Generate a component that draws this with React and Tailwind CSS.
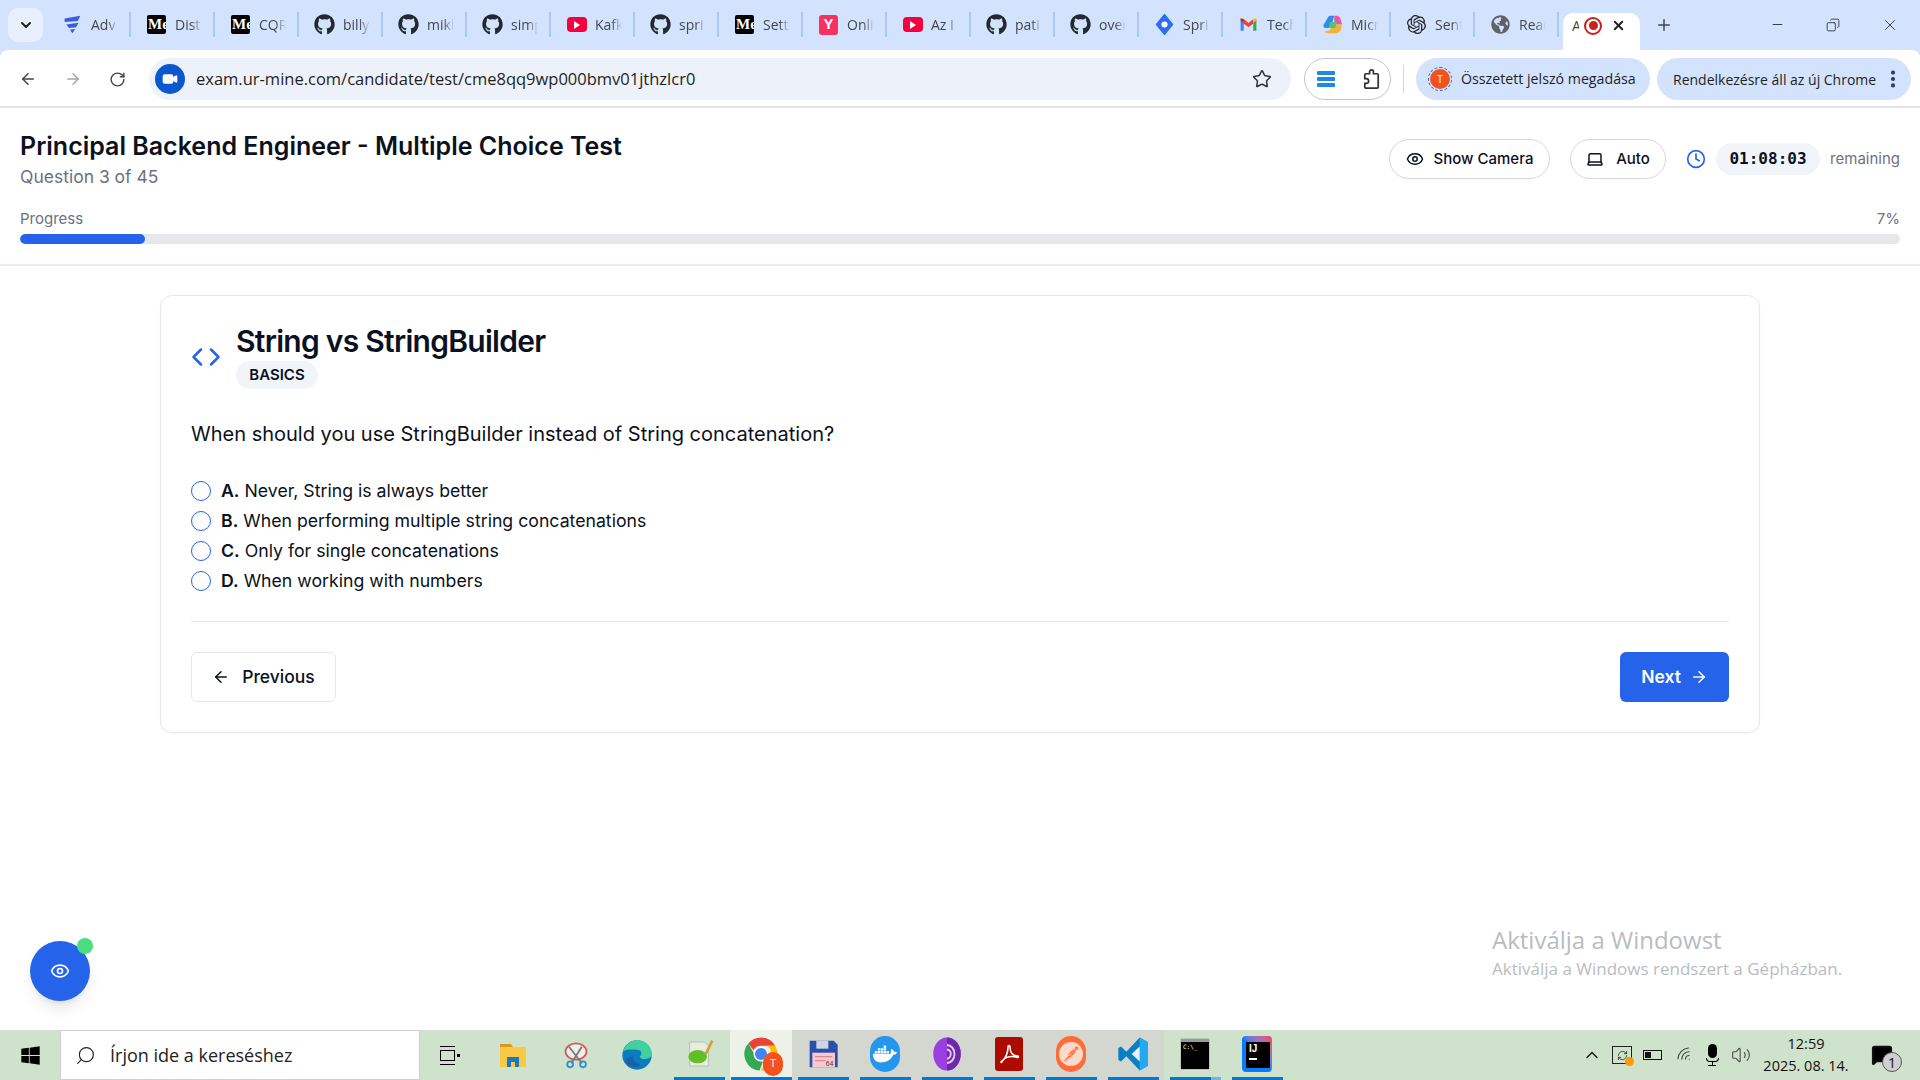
import { ArrowLeft, ArrowRight, RotateCw, Star, Video, Eye, Laptop, Clock, Code, ChevronDown, Plus, X, Minus, Copy, MoreVertical, Search, Volume2, Wifi, ChevronUp, MessageSquare, RefreshCw } from "lucide-react"
import { FaGithub, FaDocker, FaWindows, FaGlobeAmericas } from "react-icons/fa"
import { SiOpenai, SiPostman } from "react-icons/si"

const ui = "font-['Open_Sans',sans-serif]"

function Medium() {
  return (
    <div className="flex h-[19px] w-[19px] items-center overflow-hidden rounded-[2px] bg-black pl-px font-['Liberation_Serif',serif] text-[15px] font-bold leading-none text-white">
      Me
    </div>
  )
}

function Red() {
  return (
    <div className="flex h-[15px] w-[20px] items-center justify-center rounded-[4px] bg-[#f5003c]">
      <div className="h-0 w-0 border-y-[4px] border-l-[6px] border-y-transparent border-l-white" />
    </div>
  )
}

const github = <FaGithub className="h-[21px] w-[21px] text-[#24292f]" />

function Gmail() {
  return (
    <svg viewBox="0 0 24 24" className="h-[19px] w-[19px]">
      <path d="M2 20V6l4 3v11z" fill="#4285f4" />
      <path d="M22 20V6l-4 3v11z" fill="#34a853" />
      <path d="M6 11V5l6 5 6-5v6l-6 4.500z" fill="#ea4335" />
      <path d="M18 5l4-1v3l-4 3z" fill="#fbbc04" />
      <path d="M2 4l4 1v5L2 7z" fill="#c5221f" />
    </svg>
  )
}

function Copilot() {
  return (
    <svg viewBox="0 0 24 24" className="h-[21px] w-[21px]">
      <path d="M8 2h6l-4 14H4C2 16 1 14 2 12z" fill="#2f8ee8" />
      <path d="M14 2h3c2 0 3 1 4 3l2 7h-9z" fill="#e85aa8" />
      <path d="M10 12h12c1 3 0 8-5 10H7c-2 0-3-1-4-2l4-1c2 0 3-2 3-3z" fill="#f2b233" />
      <path d="M9 9h8l-2 7H8z" fill="#54c27d" />
    </svg>
  )
}

function Diamond() {
  return (
    <svg viewBox="0 0 24 24" className="h-[21px] w-[21px]">
      <path d="M12 1l9 11-9 11-9-11z" fill="#2f6fed" stroke="#2f6fed" strokeWidth="2" strokeLinejoin="round" />
      <circle cx="12" cy="12" r="3.500" fill="#fff" />
    </svg>
  )
}

const tabs = [
  { text: "Adv", icon: <svg viewBox="0 0 24 24" className="h-[21px] w-[21px]"><path d="M3 5l18-3-3 6-15 1zM5 12l14-2-3 5-8 1zM9 18l6-1-3 5z" fill="#3a5ce0" /></svg> },
  { text: "Dist", icon: <Medium /> },
  { text: "CQR", icon: <Medium /> },
  { text: "billy", icon: github },
  { text: "mikl", icon: github },
  { text: "simp", icon: github },
  { text: "Kafk", icon: <Red /> },
  { text: "spri", icon: github },
  { text: "Sett", icon: <Medium /> },
  { text: "Onli", icon: <div className="flex h-[20px] w-[19px] items-center justify-center rounded-[3px] bg-[#f7305f] font-['Liberation_Sans',sans-serif] text-[15px] font-bold text-white">Y</div> },
  { text: "Az I", icon: <Red /> },
  { text: "pati", icon: github },
  { text: "over", icon: github },
  { text: "Spri", icon: <Diamond /> },
  { text: "Tech", icon: <Gmail /> },
  { text: "Micr", icon: <Copilot /> },
  { text: "Sent", icon: <SiOpenai className="h-[19px] w-[19px] text-[#222]" /> },
  { text: "Read", icon: <FaGlobeAmericas className="h-[19px] w-[19px] text-[#5f6368]" /> },
]

function BrowserTabs() {
  return (
    <div className={`flex h-[50px] items-end ${ui}`}>
      <div className="mb-[8px] ml-[8px] mr-[4px] flex h-[34px] w-[35px] items-center justify-center rounded-[10px] bg-[#e9f0fd]">
        <ChevronDown className="h-4 w-4 text-[#1f1f1f]" strokeWidth={3} />
      </div>
      {tabs.map((t) => (
        <div key={t.text} className="mb-[13px] flex h-[25px] w-[84px] items-center border-r-2 border-[#a8c7fa] pl-[15px]">
          <div className="flex w-[21px] shrink-0 justify-center">{t.icon}</div>
          <div className="ml-[8px] w-[27px] overflow-hidden whitespace-nowrap text-[14px] text-[#444746] [mask-image:linear-gradient(to_right,black_60%,transparent)]">
            {t.text}
          </div>
        </div>
      ))}
      <div className="ml-[4px] flex h-[37px] w-[77px] items-center rounded-t-[10px] bg-white pb-[12px] pl-[9px]">
        <div className="w-[7px] overflow-hidden text-[14px] text-[#444746]">A</div>
        <div className="ml-[5px] flex h-[18px] w-[18px] items-center justify-center rounded-full border-2 border-[#c5221f]">
          <div className="h-[9px] w-[9px] rounded-full bg-[#c5221f]" />
        </div>
        <X className="ml-[9px] h-[15px] w-[15px] text-[#1f1f1f]" strokeWidth={3} />
      </div>
      <Plus className="mb-[16px] ml-[15px] h-[18px] w-[18px] text-[#444746]" strokeWidth={2} />
      <Minus className="mb-[18px] ml-[97px] h-[15px] w-[15px] text-[#333]" strokeWidth={1.500} />
      <Copy className="mb-[18px] ml-[41px] h-[14px] w-[14px] -scale-x-100 text-[#333]" strokeWidth={1.500} />
      <X className="mb-[16px] ml-[41px] h-[18px] w-[18px] text-[#333]" strokeWidth={1.200} />
    </div>
  )
}

function Toolbar() {
  return (
    <div className={`flex h-[58px] items-center rounded-t-[8px] border-b-2 border-[#e3e3e3] bg-white pt-[2px] ${ui}`}>
      <ArrowLeft className="ml-[19px] h-[18px] w-[18px] text-[#444746]" strokeWidth={2} />
      <ArrowRight className="ml-[27px] h-[18px] w-[18px] text-[#a6a8ab]" strokeWidth={2} />
      <RotateCw className="ml-[27px] h-[17px] w-[17px] text-[#444746]" strokeWidth={2} />
      <div className="ml-[23px] flex h-[42px] w-[1142px] items-center rounded-full bg-[#edf2fa] pl-[6px] pr-[19px]">
        <div className="flex h-[30px] w-[30px] items-center justify-center rounded-full bg-[#0b57d0]">
          <Video className="h-[16px] w-[16px] fill-white text-white" />
        </div>
        <div className="ml-[11px] flex-1 text-[16.500px] text-[#1f1f1f]">exam.ur-mine.com/candidate/test/cme8qq9wp000bmv01jthzlcr0</div>
        <Star className="h-[20px] w-[20px] text-[#333]" strokeWidth={1.800} />
      </div>
      <div className="ml-[13px] flex h-[42px] w-[87px] items-center justify-between rounded-full border border-[#c4c7c5] pl-[12px] pr-[7px]">
        <div className="flex w-[18px] flex-col gap-[2px]">
          <div className="h-[4px] rounded-[1px] bg-[#1e88e5]" />
          <div className="h-[4px] rounded-[1px] bg-[#1e88e5]" />
          <div className="h-[4px] rounded-[1px] bg-[#1e88e5]" />
        </div>
        <svg viewBox="0 0 24 24" fill="none" stroke="#333" strokeWidth="1.800" className="h-[23px] w-[23px]">
          <path d="M6 6h4V4a2 2 0 0 1 4 0v2h4a1 1 0 0 1 1 1v13a1 1 0 0 1-1 1H6a1 1 0 0 1-1-1v-4h1.500a2.500 2.500 0 0 0 0-5H5V7a1 1 0 0 1 1-1z" />
        </svg>
      </div>
      <div className="ml-[12px] h-[28px] w-px bg-[#c9d8f0]" />
      <div className="ml-[12px] flex h-[42px] w-[234px] items-center rounded-full bg-[#d3e3fd] pl-[12px] text-[14.200px] text-[#1f1f1f]">
        <div className="flex h-[24px] w-[24px] items-center justify-center rounded-full border border-dashed border-[#3f66a8]">
          <div className="flex h-[20px] w-[20px] items-center justify-center rounded-full bg-[#f4511e] text-[10px] text-white">T</div>
        </div>
        <span className="ml-[9px] whitespace-nowrap">Összetett jelszó megadása</span>
      </div>
      <div className="ml-[7px] flex h-[42px] w-[254px] items-center rounded-full bg-[#d3e3fd] pl-[16px] text-[14px] text-[#1f1f1f]">
        <span className="whitespace-nowrap">Rendelkezésre áll az új Chrome</span>
        <MoreVertical className="ml-[6px] h-[22px] w-[22px] text-[#1f3a68]" strokeWidth={2.500} />
      </div>
    </div>
  )
}

function PageHeader() {
  return (
    <div className="h-[158px] border-b-2 border-[#e9ecf2] px-[20px] pt-[22px]">
      <div className="flex items-start justify-between">
        <div>
          <h1 className="text-[25px] font-semibold leading-[32px] text-[#0b1120]">Principal Backend Engineer - Multiple Choice Test</h1>
          <p className="mt-[3px] text-[17.500px] leading-[24px] text-gray-500">Question 3 of 45</p>
        </div>
        <div className="mt-[9px] flex items-center text-[15px]">
          <button className="flex h-[40px] w-[161px] items-center justify-center gap-[10px] rounded-full border border-[#d5d7de] font-medium text-[#0b1120]">
            <Eye className="h-[18px] w-[18px]" />
            Show Camera
          </button>
          <button className="ml-[20px] flex h-[40px] w-[96px] items-center justify-center gap-[12px] rounded-full border border-[#d5d7de] font-medium text-[#0b1120]">
            <Laptop className="h-[18px] w-[18px]" />
            Auto
          </button>
          <Clock className="ml-[20px] h-[20px] w-[20px] text-[#2563eb]" />
          <div className="ml-[10px] flex h-[32px] w-[104px] items-center justify-center rounded-full bg-[#f1f5f9] font-['DejaVu_Sans_Mono',monospace] text-base font-bold text-[#0b1120]">01:08:03</div>
          <span className="ml-[10px] w-[70px] whitespace-nowrap text-right text-gray-500">remaining</span>
        </div>
      </div>
      <div className="mt-[20px] flex justify-between text-[15px] leading-[20px] text-gray-500">
        <span>Progress</span>
        <span>7%</span>
      </div>
      <div className="mt-[5px] h-[10px] overflow-hidden rounded-full bg-[#e5e7eb]">
        <div className="h-full rounded-full bg-[#2563eb]" style={{ width: "6.670%" }} />
      </div>
    </div>
  )
}

const options = [
  ["A.", "Never, String is always better"],
  ["B.", "When performing multiple string concatenations"],
  ["C.", "Only for single concatenations"],
  ["D.", "When working with numbers"],
]

function QuestionCard() {
  return (
    <div className="mx-auto mt-[29px] h-[438px] w-[1600px] rounded-[12px] border border-[#e5e7eb] bg-white px-[30px] pt-[27px] shadow-[0_1px_2px_rgba(0,0,0,0.03)]">
      <div className="flex items-center gap-[15px]">
        <Code className="mt-[1px] h-[30px] w-[30px] text-[#2563eb]" strokeWidth={2} />
        <div>
          <h2 className="text-[30px] font-semibold leading-[36px] tracking-[-0.720px] text-[#0b1120]">String vs StringBuilder</h2>
          <span className="mt-[2px] flex h-[28px] w-[82px] items-center justify-center rounded-full bg-[#f1f5f9] text-[15px] font-semibold text-[#0b1120]">BASICS</span>
        </div>
      </div>
      <p className="mt-[31px] text-xl leading-[28px] text-[#0b1120]">When should you use StringBuilder instead of String concatenation?</p>
      <div className="mt-[28px] flex flex-col">
        {options.map(([letter, text]) => (
          <div key={letter} className="flex h-[30px] items-center gap-[10px] text-[17.700px] text-[#0b1120]">
            <div className="h-[20px] w-[20px] rounded-full border-[1.500px] border-[#2563eb]" />
            <span><b className="font-semibold">{letter}</b> {text}</span>
          </div>
        ))}
      </div>
      <div className="mt-[25px] h-px bg-[#e5e7eb]" />
      <div className="mt-[30px] flex justify-between">
        <button className="flex h-[50px] w-[145px] items-center justify-center gap-[12px] rounded-[6px] border border-[#e5e7eb] text-[17.500px] font-medium text-[#0b1120]">
          <ArrowLeft className="h-[18px] w-[18px]" />
          Previous
        </button>
        <button className="flex h-[50px] w-[109px] items-center justify-center gap-[9px] rounded-[6px] bg-[#2563eb] text-[17.500px] font-semibold text-white">
          Next
          <ArrowRight className="h-[18px] w-[18px]" />
        </button>
      </div>
    </div>
  )
}

function Chrome() {
  return (
    <div className="relative h-[36px] w-[36px]">
      <svg viewBox="0 0 24 24" className="h-[36px] w-[36px]">
        <path d="M12 1a11 11 0 0 1 9.500 5.500H12a5.500 5.500 0 0 0-5 3L3.500 5A11 11 0 0 1 12 1z" fill="#ea4335" />
        <path d="M21.500 6.500A11 11 0 0 1 12 23l4.500-8a5.500 5.500 0 0 0 0-8.500z" fill="#fbbc04" />
        <path d="M3.500 5L7.500 12a5.500 5.500 0 0 0 6 4.500L11 23A11 11 0 0 1 3.500 5z" fill="#34a853" />
        <circle cx="12" cy="12" r="5" fill="#fff" />
        <circle cx="12" cy="12" r="4" fill="#4285f4" />
      </svg>
      <div className="absolute -bottom-[4px] -right-[4px] flex h-[24px] w-[20px] items-center justify-center rounded-full bg-[#f4511e] text-[11px] text-white">T</div>
    </div>
  )
}

const apps = [
  { bg: "", line: "w-[51px] bg-[#0078d4]", icon: <svg viewBox="0 0 24 24" className="h-[32px] w-[32px]"><path d="M5 3h11l3 3v15H5z" fill="#e8ece2" stroke="#aaa" strokeWidth=".5" /><ellipse cx="11" cy="14" rx="7" ry="5" fill="#5fbf24" /><path d="M17 12l5-10" stroke="#d4a02a" strokeWidth="2" /></svg> },
  { bg: "bg-[#edf2e9]", line: "w-[61px] bg-[#0078d4]", icon: <Chrome /> },
  { bg: "bg-[#d4d6d0]", line: "w-[51px] bg-[#0078d4]", icon: <svg viewBox="0 0 24 24" className="h-[32px] w-[32px]"><path d="M2 2h18l3 3v17H2z" fill="#2b4ea8" /><path d="M7 2h9v6H7z" fill="#cfd5e3" /><path d="M4 11h17v11H4z" fill="#f6c9cf" /><path d="M6 14h13M6 17h8" stroke="#d98791" /><text x="14" y="21" fontSize="5" fill="#333">64</text></svg> },
  { bg: "bg-[#d4d6d0]", line: "w-[51px] bg-[#0078d4]", icon: <div className="flex h-[36px] w-[30px] items-center justify-center rounded-full bg-[#2396ed]"><FaDocker className="h-[24px] w-[24px] text-white" /></div> },
  { bg: "bg-[#d4d6d0]", line: "w-[51px] bg-[#0078d4]", icon: <svg viewBox="0 0 24 24" className="h-[36px] w-[30px]" preserveAspectRatio="none"><circle cx="12" cy="12" r="11" fill="#9b3fe0" /><path d="M12 1a11 11 0 0 1 0 22z" fill="#6d2aa6" /><path d="M12 6a6 6 0 0 1 0 12M12 9a3 3 0 0 1 0 6" fill="none" stroke="#e5c9f7" strokeWidth="1.500" /></svg> },
  { bg: "bg-[#d4d6d0]", line: "w-[51px] bg-[#0078d4]", icon: <div className="flex h-[34px] w-[28px] items-center justify-center rounded-[3px] bg-[#ad0b00]"><svg viewBox="0 0 24 24" className="h-[24px] w-[24px]"><path d="M4 20c4-3 7-9 7-15 0-2 2-2 2 0 0 6 3 9 8 9 1 1 0 2-2 1-5-1-10 0-13 3-1 2-2 3-2 2z" fill="none" stroke="#fff" strokeWidth="1.600" /></svg></div> },
  { bg: "bg-[#d4d6d0]", line: "w-[51px] bg-[#0078d4]", icon: <div className="flex h-[36px] w-[30px] items-center justify-center rounded-full bg-[#ff6c37]"><SiPostman className="h-[24px] w-[24px] text-[#ffd9c9]" /></div> },
  { bg: "bg-[#d4d6d0]", line: "w-[51px] bg-[#0078d4]", icon: <svg viewBox="0 0 24 24" className="h-[36px] w-[32px]" preserveAspectRatio="none"><path d="M17 1l6 3v16l-6 3L7 13.500 3 17l-2-1V8l2-1 4 3.500z" fill="#0a7fc4" /><path d="M17 1l6 3v16l-6 3z" fill="#23a9f2" /><path d="M17 7l-6 5 6 5z" fill="#fff" fillOpacity=".9" /></svg> },
  { bg: "", line: "w-[51px] bg-gradient-to-r from-[#0078d4] from-80% to-[#6cb4ea] to-80%", icon: <div className="h-[30px] w-[28px] border-t-[3px] border-[#9a9a9a] bg-black pl-[2px] pt-[2px] font-['DejaVu_Sans_Mono',monospace] text-[6px] leading-none text-white shadow-[0_0_1px_#555]">C:\_</div> },
  { bg: "", line: "w-[51px] bg-[#0078d4]", icon: <div className="flex h-[36px] w-[30px] items-end rounded-[4px] bg-gradient-to-tr from-[#087cfa] via-[#087cfa] to-[#fe2857]"><div className="mb-[4px] ml-[4px] h-[26px] w-[24px] bg-black pl-[3px] pt-[1px] font-['Liberation_Sans',sans-serif] text-[10px] font-bold leading-[12px] text-white">IJ<div className="mt-[3px] h-[2px] w-[8px] bg-white" /></div></div> },
]

function Taskbar() {
  return (
    <div className={`flex h-[50px] items-stretch bg-[#cfe2cb] ${ui}`}>
      <div className="flex w-[60px] items-center justify-center">
        <FaWindows className="h-[21px] w-[21px] text-black" />
      </div>
      <div className="flex w-[360px] items-center border border-[#cfcfcf] bg-white pl-[14px] text-[18px] text-[#222]">
        <Search className="h-[21px] w-[21px] -scale-x-100" strokeWidth={1.300} />
        <span className="ml-[14px] whitespace-nowrap">Írjon ide a kereséshez</span>
      </div>
      <div className="ml-[20px] flex w-[20px] items-center gap-[2px]">
        <div className="flex flex-col gap-[3px]">
          <div className="h-px w-[15px] bg-black" />
          <div className="h-[11px] w-[15px] border border-black" />
          <div className="h-px w-[15px] bg-black" />
        </div>
        <div className="h-[3px] w-[3px] bg-black" />
      </div>
      <div className="ml-[39px] flex w-[28px] items-center">
        <svg viewBox="0 0 28 28" className="h-[28px] w-[28px]">
          <path d="M1 3h11l2 3H1z" fill="#d99a1c" />
          <path d="M1 6h26v20H1z" fill="#f8c846" />
          <path d="M8 26V16h12v10h-4v-5h-4v5z" fill="#1b78c9" />
        </svg>
      </div>
      <div className="ml-[35px] flex w-[28px] items-center">
        <svg viewBox="0 0 24 24" className="h-[30px] w-[28px]"><ellipse cx="12" cy="9" rx="9" ry="7" fill="#eee" stroke="#d55" strokeWidth="1.500" /><path d="M6 5l11 14M17 5L8 19" stroke="#777" strokeWidth="1.500" /><circle cx="7" cy="20" r="2.500" fill="none" stroke="#2a8fd0" strokeWidth="1.500" /><circle cx="18" cy="20" r="2.500" fill="none" stroke="#2a8fd0" strokeWidth="1.500" /></svg>
      </div>
      <div className="ml-[31px] flex w-[32px] items-center">
        <svg viewBox="0 0 24 24" className="h-[32px] w-[32px]"><circle cx="12" cy="12" r="11" fill="#0c7bbf" /><path d="M1 12C2 4 8 1 12 1c6 0 11 4 11 10 0 3-3 4-6 4-2 0-3-1-3-2 2-1 2-5-2-5-6 0-11-1-11 4z" fill="#41d1a0" /><path d="M9 13c0 4 3 6 6 6-3 3-10 3-12-3 2-2 4-3 6-3z" fill="#1a5fa8" /></svg>
      </div>
      <div className="ml-[15px] flex">
        {apps.map((a, i) => (
          <div key={i} className={`flex h-full w-[62px] flex-col items-center ${a.bg}`}>
            <div className="flex flex-1 items-center justify-center">{a.icon}</div>
            <div className={`h-[3px] ${a.line}`} />
          </div>
        ))}
      </div>
      <div className="ml-auto flex items-center pr-[6px] text-[#111]">
        <ChevronUp className="h-[20px] w-[20px]" strokeWidth={1.500} />
        <div className="relative ml-[10px] flex h-[18px] w-[20px] items-center justify-center border border-[#222]">
          <RefreshCw className="h-[11px] w-[11px]" strokeWidth={1.500} />
          <div className="absolute -bottom-[3px] -right-[3px] h-[9px] w-[9px] rounded-full bg-[#ff9a00]" />
        </div>
        <div className="ml-[11px] flex h-[10px] w-[19px] items-center border border-[#111] pl-px">
          <div className="h-[6px] w-[6px] bg-[#111]" />
        </div>
        <Wifi className="ml-[14px] h-[18px] w-[18px] -rotate-45 opacity-70" strokeWidth={1.500} />
        <div className="ml-[8px] flex w-[20px] flex-col items-center">
          <div className="h-[14px] w-[9px] rounded-full bg-black" />
          <div className="h-[4px] w-[13px] rounded-b-full border-x border-b border-black" />
          <div className="h-[3px] w-px bg-black" />
          <div className="h-px w-[8px] bg-black" />
        </div>
        <Volume2 className="ml-[9px] h-[20px] w-[20px] opacity-70" strokeWidth={1.300} />
        <div className="ml-[13px] flex w-[84px] flex-col items-center text-[14.500px] leading-[22px]">
          <span>12:59</span>
          <span className="whitespace-nowrap">2025. 08. 14.</span>
        </div>
        <div className="relative ml-[23px] mr-[21px]">
          <MessageSquare className="h-[22px] w-[22px] fill-black" />
          <div className="absolute -bottom-[6px] -right-[9px] flex h-[20px] w-[20px] items-center justify-center rounded-full border border-[#555] bg-[#cfcfcf] text-[14px]">1</div>
        </div>
      </div>
    </div>
  )
}

export default function App() {
  return (
    <div className="flex h-screen w-full flex-col overflow-hidden bg-[#d3e3fd] font-['Inter',sans-serif]">
      <BrowserTabs />
      <Toolbar />
      <main className="relative flex-1 bg-white">
        <PageHeader />
        <QuestionCard />
        <div className="absolute left-[30px] top-[833px] flex h-[60px] w-[60px] items-center justify-center rounded-full bg-[#2563eb] shadow-lg">
          <Eye className="h-[20px] w-[20px] text-white" />
          <div className="absolute -right-[3px] -top-[3px] h-[16px] w-[16px] rounded-full bg-[#4ade80]" />
        </div>
        <div className={`absolute left-[1492px] top-[815px] text-[#b9bcbf] ${ui}`}>
          <div className="text-[24px] leading-[34px]">Aktiválja a Windowst</div>
          <div className="text-[17px] leading-[24px]">Aktiválja a Windows rendszert a Gépházban.</div>
        </div>
      </main>
      <Taskbar />
    </div>
  )
}
